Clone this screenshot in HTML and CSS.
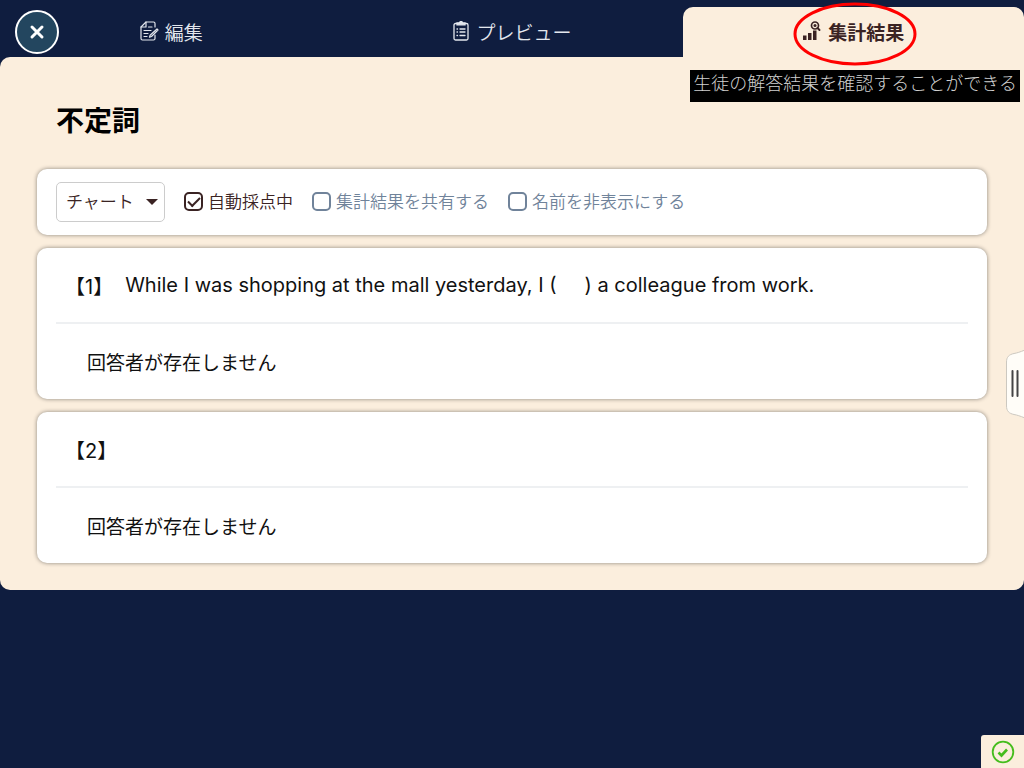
FILE: index.html
```html
<!DOCTYPE html>
<html lang="ja">
<head>
  <meta charset="UTF-8">
  <meta name="viewport" content="width=device-width, initial-scale=1.0">
  <title>不定詞</title>
  <link rel="stylesheet" href="styles.css">
</head>
<body>
  <!-- ヘッダー -->
  <header class="header">
    <button type="button" class="close-btn" aria-label="閉じる">
      <svg width="16" height="16" viewBox="0 0 16 16"><path d="M3 3l10 10M13 3L3 13" stroke="#fff" stroke-width="3" stroke-linecap="round"/></svg>
    </button>
    <nav class="tabs">
      <a href="#" class="tab">
        <svg width="20" height="20" viewBox="0 0 20 20" fill="none" stroke="currentColor" stroke-width="1.2" stroke-linecap="round" stroke-linejoin="round">
          <path d="M16 6V2.500A1.500 1.500 0 0 0 14.500 1H7L2 6v11.500A1.500 1.500 0 0 0 3.500 19h11a1.500 1.500 0 0 0 1.500-1.500V14"/>
          <path d="M7 1v5H2M9.500 6H13M5 9.500h7M5 12.500h4M5 15.500h3"/>
          <path d="M18 8l1 1-6.500 6.500-2 .7.600-2z"/>
        </svg>
        <span>編集</span>
      </a>
      <a href="#" class="tab">
        <svg width="18" height="20" viewBox="0 0 18 20" fill="none" stroke="currentColor" stroke-width="1.3" stroke-linecap="round">
          <rect x="2" y="2.500" width="14" height="16.500" rx="1.500"/>
          <path d="M5 3.800V2h2.500a1.500 1.500 0 0 1 3 0H13v1.800z" fill="currentColor"/>
          <path d="M5 8h.5M8 8h5M5 11h.5M8 11h5M5 14.500h.5M8 14.500h5"/>
        </svg>
        <span>プレビュー</span>
      </a>
      <a href="#" class="tab active">
        <svg width="20" height="20" viewBox="0 0 20 20" fill="currentColor">
          <rect x="1" y="14.500" width="3.500" height="4.500"/>
          <rect x="6" y="12" width="3.500" height="7"/>
          <rect x="11" y="9.500" width="3.500" height="9.500"/>
          <circle cx="13" cy="4.500" r="3.500" fill="none" stroke="currentColor" stroke-width="1.700"/>
          <circle cx="13" cy="4.500" r="1.500"/>
          <path d="M15.500 7l2 2" stroke="currentColor" stroke-width="1.900" stroke-linecap="round"/>
        </svg>
        <span>集計結果</span>
        <svg class="marker" width="124" height="64" viewBox="0 0 124 64"><ellipse cx="62" cy="32" rx="60" ry="30" fill="none" stroke="#f00" stroke-width="3"/></svg>
      </a>
    </nav>
    <p class="note">生徒の解答結果を確認することができる</p>
  </header>

  <!-- 集計結果 -->
  <main class="content">
    <h1>不定詞</h1>

    <form class="card toolbar">
      <div class="select-box">
        <select aria-label="表示形式">
          <option>チャート</option>
        </select>
      </div>
      <label class="check"><input type="checkbox" checked><span>自動採点中</span></label>
      <label class="check"><input type="checkbox"><span>集計結果を共有する</span></label>
      <label class="check"><input type="checkbox"><span>名前を非表示にする</span></label>
    </form>

    <section class="card">
      <h2 class="question"><span class="number">【1】</span><span class="sentence">While I was shopping at the mall yesterday, I (&nbsp;&nbsp;&nbsp;&nbsp; ) a colleague from work.</span></h2>
      <p class="answer">回答者が存在しません</p>
    </section>

    <section class="card">
      <h2 class="question"><span class="number">【2】</span></h2>
      <p class="answer">回答者が存在しません</p>
    </section>
  </main>

  <!-- 右端のハンドル -->
  <button type="button" class="handle" aria-label="パネルを開く">
    <svg width="19" height="70" viewBox="0 0 19 70">
      <path d="M20 1C15 3 12 4 9 4.500 4 5.500 1.500 8 1.500 13v44c0 5 2.500 7.500 7.500 8.500 3 .5 6 1.500 11 3.500" fill="#fffdf8" stroke="#ccc8c0"/>
      <path d="M7.500 22v25M12.500 22v25" stroke="#444" stroke-width="2" stroke-linecap="round"/>
    </svg>
  </button>

  <div class="status">
    <svg width="24" height="24" viewBox="0 0 24 24" fill="none" stroke="#45bd1d">
      <circle cx="12" cy="12" r="10.300" stroke-width="1.800"/>
      <path d="M7.500 12.500l3 3 5.500-6" stroke-width="2.600"/>
    </svg>
  </div>
</body>
</html>
```

FILE: styles.css
```css
* {
    box-sizing: border-box;
}

body {
    margin: 0;
    background-color: #0f1d3f;
    color: #111;
    font-family: "Noto Sans CJK JP", sans-serif;
    font-size: 19px;
}

/* ヘッダー */
.header {
    position: relative;
    padding-top: 7px;
}

.close-btn {
    position: absolute;
    top: 10px;
    left: 15px;
    display: flex;
    align-items: center;
    justify-content: center;
    width: 44px;
    height: 44px;
    padding: 0;
    border: 2px solid #fff;
    border-radius: 50%;
    background-color: #23465f;
    cursor: pointer;
}

.tabs {
    display: grid;
    grid-template-columns: repeat(3, 1fr);
}

.tab {
    position: relative;
    display: flex;
    align-items: center;
    justify-content: center;
    gap: 6px;
    height: 50px;
    padding-bottom: 2px;
    border-radius: 10px 10px 0 0;
    color: #e3e7ee;
    font-weight: 350;
    text-decoration: none;
}

.tab.active {
    background-color: #fbeedd;
    color: #3a2323;
    font-weight: 700;
}

.marker {
    position: absolute;
    top: -5px;
    left: calc(50% - 60px);
}

.note {
    position: absolute;
    top: 70px;
    right: 4px;
    height: 32px;
    margin: 0;
    padding: 0 3px;
    background-color: #000;
    color: #d0d0d0;
    font-size: 18px;
    font-weight: 300;
    line-height: 24px;
}

/* コンテンツ */
.content {
    display: flex;
    flex-direction: column;
    gap: 13px;
    padding: 43px 37px 27px;
    border-radius: 10px 0 10px 10px;
    background-color: #fbeedd;
}

h1 {
    margin: 0 0 16px;
    padding-left: 19px;
    color: #000;
    font-size: 28px;
    font-weight: 700;
    line-height: 38px;
    padding-bottom: 2px;
}

.card {
    padding: 0 19px;
    border-radius: 10px;
    background-color: #fff;
    box-shadow: 0 0 4px rgba(0, 0, 0, 0.45);
}

.toolbar {
    display: flex;
    align-items: center;
    gap: 19px;
    height: 66px;
    padding-bottom: 1px;
    font-size: 17px;
    font-weight: 350;
}

.select-box {
    position: relative;
}

.select-box::after {
    content: "";
    position: absolute;
    top: 17px;
    right: 7px;
    border: 6px solid transparent;
    border-top-color: #3a2323;
    border-bottom: 0;
    pointer-events: none;
}

select {
    appearance: none;
    width: 109px;
    height: 40px;
    padding: 0 10px 2px 9px;
    border: 1px solid #ccc;
    border-radius: 5px;
    background-color: #fff;
    color: #3a2323;
    font: inherit;
}

.check {
    display: flex;
    align-items: center;
    gap: 5px;
    color: #70839a;
}

.check:has(input:checked) {
    color: #3a2323;
}

.check span {
    padding-bottom: 2px;
}

.check input {
    appearance: none;
    display: flex;
    align-items: center;
    justify-content: center;
    width: 19px;
    height: 19px;
    margin: 0;
    border: 2px solid currentColor;
    border-radius: 5px;
    color: inherit;
}

.check input:checked::before {
    content: "";
    width: 10px;
    height: 5px;
    margin-bottom: 3px;
    border-left: 2px solid currentColor;
    border-bottom: 2px solid currentColor;
    transform: rotate(-45deg);
}

/* 設問 */
.question {
    display: flex;
    align-items: center;
    gap: 12px;
    height: 76px;
    margin: 0;
    padding-left: 9px;
    border-bottom: 2px solid #eef0f2;
    font-family: Inter, "Noto Sans CJK JP", sans-serif;
    font-size: 20px;
    font-weight: 400;
}

.answer {
    display: flex;
    align-items: center;
    height: 75px;
    margin: 0;
    padding-left: 31px;
}

/* 画面端の部品 */
.handle {
    position: fixed;
    top: 349px;
    right: 0;
    display: flex;
    padding: 0;
    border: 0;
    background: none;
    cursor: pointer;
}

.status {
    position: fixed;
    right: 0;
    bottom: 0;
    display: flex;
    align-items: center;
    justify-content: center;
    width: 43px;
    height: 33px;
    border-radius: 3px 0 0 0;
    background-color: #fbeedd;
}
```
